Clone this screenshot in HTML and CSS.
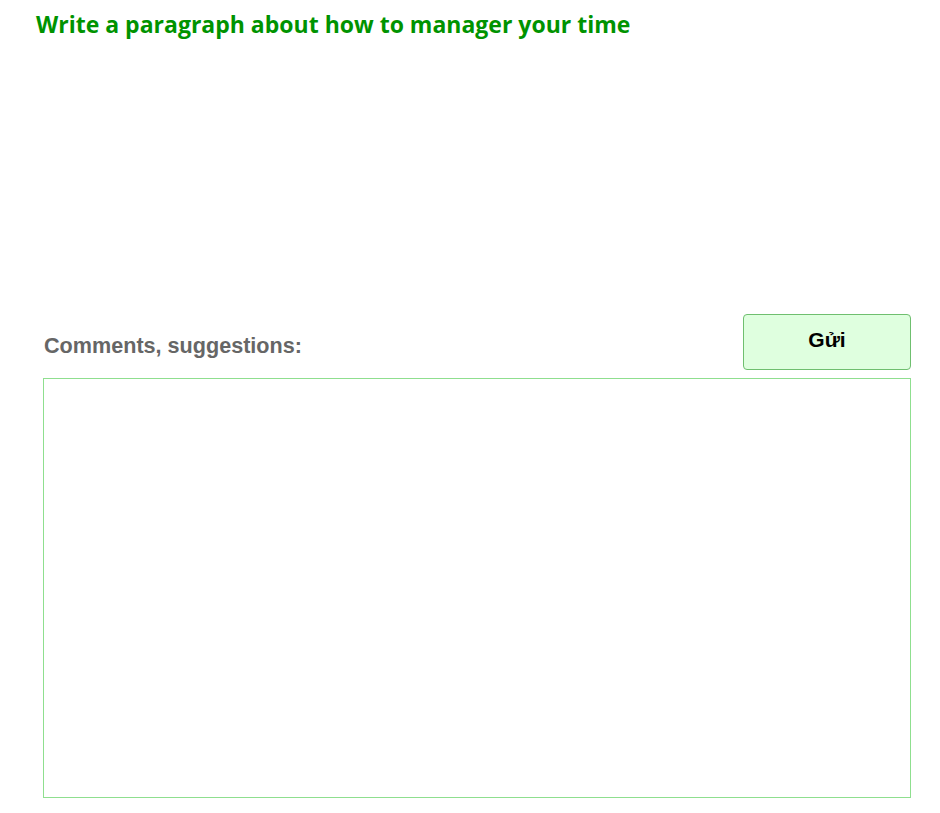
FILE: index.html
```html
<!DOCTYPE html>
<html>
<head>
<meta charset="utf-8">
<link rel="stylesheet" href="styles.css">
</head>
<body>
<h1 class="title">Write a paragraph about how to manager your time</h1>
<div class="feedback">
  <div class="feedback-head">
    <label class="label" for="cmt">Comments, suggestions:</label>
    <button class="send" type="button">Gửi</button>
  </div>
  <textarea id="cmt" class="comments"></textarea>
</div>
</body>
</html>
```
FILE: styles.css
```css
html, body {
  margin: 0;
  padding: 0;
  background: #fff;
}
body {
  width: 940px;
  height: 813px;
  overflow: hidden;
}
.title {
  margin: 0;
  padding: 9px 0 0 36px;
  font-family: "Open Sans", sans-serif;
  font-weight: 700;
  font-size: 23px;
  line-height: 30px;
  color: #009300;
}
.feedback {
  margin: 275px 0 0 43px;
  width: 868px;
}
.feedback-head {
  display: flex;
  justify-content: space-between;
  align-items: flex-end;
  height: 56px;
}
.label {
  font-family: "Liberation Sans", Arial, sans-serif;
  font-weight: 700;
  font-size: 21.6px;
  color: #666;
  padding: 0 0 11px 1px;
}
.send {
  width: 168px;
  height: 56px;
  background: #dfffdf;
  border: 1px solid #6fbf6f;
  border-radius: 4px;
  font-family: "Liberation Sans", Arial, sans-serif;
  font-weight: 700;
  font-size: 21px;
  color: #000;
  padding: 0 0 4px 0;
  align-self: flex-start;
}
.comments {
  display: block;
  box-sizing: border-box;
  margin-top: 8px;
  width: 868px;
  height: 420px;
  border: 1px solid #8fdf8f;
  resize: none;
  outline: none;
  padding: 2px;
}
```
